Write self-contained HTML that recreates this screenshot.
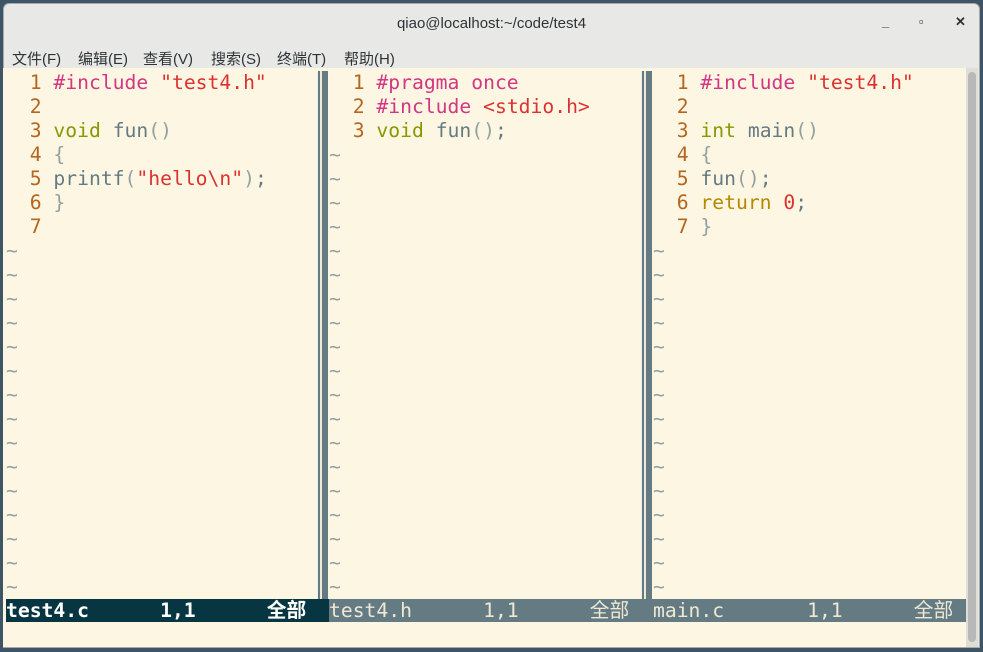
<!DOCTYPE html>
<html><head><meta charset="utf-8"><style>
*{margin:0;padding:0;box-sizing:border-box}
body{width:983px;height:652px;background:#3d5566;position:relative;overflow:hidden;font-family:"Liberation Sans","Noto Sans CJK SC",sans-serif}
.win{position:absolute;left:3px;top:3px;width:977px;height:645px;background:#e8e8e7;border-radius:6px 6px 0 0;border:1px solid #a8a8a8}
.title{position:absolute;left:0;right:0;top:11px;text-align:center;font-size:15px;color:#2e3436}
.ctl{position:absolute;top:10px;font-size:13px;color:#2e3436;font-weight:bold}
.menu{position:absolute;top:44px;font-size:15px;color:#2e3436}
.term{position:absolute;left:3px;top:68px;width:975px;height:579px;background:#fdf6e3}
.pane{position:absolute;top:3px;height:528px;font-family:"DejaVu Sans Mono","Liberation Mono","Noto Sans CJK SC",monospace;font-size:19.7px;line-height:24px;color:#657b83;white-space:pre;overflow:hidden}
.ln{color:#b5651d}.pp{color:#d33682}.st{color:#dc322f}.ty{color:#859900}.kw{color:#b58900}.pa{color:#93a1a1}.nu{color:#dc322f}.td{color:#93a1a1}
.sep{position:absolute;top:3px;height:528px;width:11px;background:#657b83;border-left:1px solid #eee}
.sep::after{content:"";position:absolute;left:2px;top:0;bottom:0;width:2px;background:#eee8d5}
.st1{position:absolute;top:531px;height:23px;font-family:"DejaVu Sans Mono","Noto Sans CJK SC",monospace;font-size:19.7px;line-height:23px;white-space:pre;overflow:hidden}
.scroll{position:absolute;left:963px;top:0;width:12px;height:579px;background:#e0ddd6}
.thumb{position:absolute;left:2px;top:4px;width:8px;height:570px;background:#b8b8b8;border-radius:4px}
</style></head><body>
<div class="win">
<div class="title">qiao@localhost:~/code/test4</div>
<div class="ctl" style="left:878px">_</div>
<div class="ctl" style="left:915px">▫</div>
<div class="ctl" style="left:951px">✕</div>
<div class="menu" style="left:8px">文件(F)</div>
<div class="menu" style="left:74px">编辑(E)</div>
<div class="menu" style="left:139px">查看(V)</div>
<div class="menu" style="left:207px">搜索(S)</div>
<div class="menu" style="left:273px">终端(T)</div>
<div class="menu" style="left:340px">帮助(H)</div>
</div>
<div class="term">
<div class="pane" style="left:3px;width:311px"><span class="ln">  1 </span><span class="pp">#include</span> <span class="st">"test4.h"</span>
<span class="ln">  2 </span>
<span class="ln">  3 </span><span class="ty">void</span> fun<span class="pa">()</span>
<span class="ln">  4 </span><span class="pa">{</span>
<span class="ln">  5 </span>printf<span class="pa">(</span><span class="st">"hello\n"</span><span class="pa">)</span>;
<span class="ln">  6 </span><span class="pa">}</span>
<span class="ln">  7 </span>
<span class="td">~
~
~
~
~
~
~
~
~
~
~
~
~
~
~</span></div>
<div class="sep" style="left:314px"></div>
<div class="pane" style="left:326px;width:312px"><span class="ln">  1 </span><span class="pp">#pragma once</span>
<span class="ln">  2 </span><span class="pp">#include</span> <span class="st">&lt;stdio.h&gt;</span>
<span class="ln">  3 </span><span class="ty">void</span> fun<span class="pa">()</span>;
<span class="td">~
~
~
~
~
~
~
~
~
~
~
~
~
~
~
~
~
~
~</span></div>
<div class="sep" style="left:638px"></div>
<div class="pane" style="left:650px;width:313px"><span class="ln">  1 </span><span class="pp">#include</span> <span class="st">"test4.h"</span>
<span class="ln">  2 </span>
<span class="ln">  3 </span><span class="ty">int</span> main<span class="pa">()</span>
<span class="ln">  4 </span><span class="pa">{</span>
<span class="ln">  5 </span>fun<span class="pa">()</span>;
<span class="ln">  6 </span><span class="kw">return</span> <span class="nu">0</span>;
<span class="ln">  7 </span><span class="pa">}</span>
<span class="td">~
~
~
~
~
~
~
~
~
~
~
~
~
~
~</span></div>
<div class="st1" style="left:3px;width:323px;background:#073642;color:#fff;font-weight:bold">test4.c      1,1      全部</div>
<div class="st1" style="left:326px;width:324px;background:#657b83;color:#eee8d5">test4.h      1,1      全部</div>
<div class="st1" style="left:650px;width:313px;background:#657b83;color:#eee8d5">main.c       1,1      全部</div>
<div class="scroll"><div class="thumb"></div></div>
</div>
</body></html>
